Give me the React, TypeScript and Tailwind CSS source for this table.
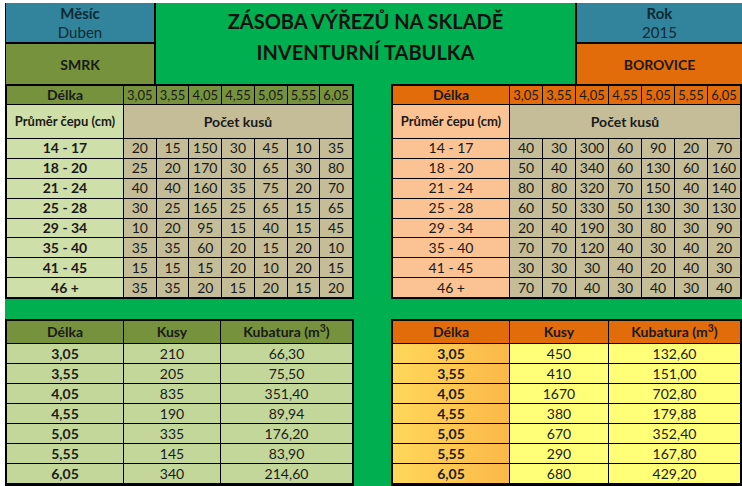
const lengths = ['3,05', '3,55', '4,05', '4,55', '5,05', '5,55', '6,05']

const smrkRows: [string, number[]][] = [
  ['14 - 17', [20, 15, 150, 30, 45, 10, 35]],
  ['18 - 20', [25, 20, 170, 30, 65, 30, 80]],
  ['21 - 24', [40, 40, 160, 35, 75, 20, 70]],
  ['25 - 28', [30, 25, 165, 25, 65, 15, 65]],
  ['29 - 34', [10, 20, 95, 15, 40, 15, 45]],
  ['35 - 40', [35, 35, 60, 20, 15, 20, 10]],
  ['41 - 45', [15, 15, 15, 20, 10, 20, 15]],
  ['46 +', [35, 35, 20, 15, 20, 15, 20]],
]

const borovRows: [string, number[]][] = [
  ['14 - 17', [40, 30, 300, 60, 90, 20, 70]],
  ['18 - 20', [50, 40, 340, 60, 130, 60, 160]],
  ['21 - 24', [80, 80, 320, 70, 150, 40, 140]],
  ['25 - 28', [60, 50, 330, 50, 130, 30, 130]],
  ['29 - 34', [20, 40, 190, 30, 80, 30, 90]],
  ['35 - 40', [70, 70, 120, 40, 30, 40, 20]],
  ['41 - 45', [30, 30, 30, 40, 20, 40, 30]],
  ['46 +', [70, 70, 40, 30, 40, 30, 40]],
]

const smrkSum: [string, string, string][] = [
  ['3,05', '210', '66,30'],
  ['3,55', '205', '75,50'],
  ['4,05', '835', '351,40'],
  ['4,55', '190', '89,94'],
  ['5,05', '335', '176,20'],
  ['5,55', '145', '83,90'],
  ['6,05', '340', '214,60'],
]

const borovSum: [string, string, string][] = [
  ['3,05', '450', '132,60'],
  ['3,55', '410', '151,00'],
  ['4,05', '1670', '702,80'],
  ['4,55', '380', '179,88'],
  ['5,05', '670', '352,40'],
  ['5,55', '290', '167,80'],
  ['6,05', '680', '429,20'],
]

const cell = 'flex items-center justify-center leading-none'

function CountTable({ rows, head, label, labelBold, width }: {
  rows: [string, number[]][]
  head: string
  label: string
  labelBold: boolean
  width: string
}) {
  return (
    <div className={`${width} h-full bg-black p-[2px] grid gap-px grid-cols-[116px_repeat(7,1fr)] grid-rows-[18px_33px_repeat(8,1fr)] text-[14px]`}>
      <div className={`${cell} ${head} font-bold`}>Délka</div>
      {lengths.map((l) => (
        <div key={l} className={`${cell} ${head} text-[13px]`}>{l}</div>
      ))}
      <div className={`${cell} ${label} font-bold text-[13px]`}>Průměr čepu (cm)</div>
      <div className={`${cell} col-span-7 bg-[#c4bd97] font-bold`}>Počet kusů</div>
      {rows.map(([range, vals]) => (
        <div key={range} className="contents">
          <div className={`${cell} ${label} ${labelBold ? 'font-bold' : ''}`}>{range}</div>
          {vals.map((v, i) => (
            <div key={i} className={`${cell} bg-[#c4bd97]`}>{v}</div>
          ))}
        </div>
      ))}
    </div>
  )
}

function SumTable({ rows, head, first, rest, width, cols }: {
  rows: [string, string, string][]
  head: string
  first: string
  rest: string
  width: string
  cols: string
}) {
  return (
    <div className={`${width} h-full bg-black p-[2px] grid gap-px ${cols} grid-rows-[22px_repeat(7,19px)] text-[14px]`}>
      <div className={`${cell} ${head} font-bold`}>Délka</div>
      <div className={`${cell} ${head} font-bold`}>Kusy</div>
      <div className={`${cell} ${head} font-bold`}>
        <span>Kubatura (m<sup>3</sup>)</span>
      </div>
      {rows.map(([l, k, m]) => (
        <div key={l} className="contents">
          <div className={`${cell} ${first} font-bold`}>{l}</div>
          <div className={`${cell} ${rest}`}>{k}</div>
          <div className={`${cell} ${rest}`}>{m}</div>
        </div>
      ))}
    </div>
  )
}

export default function App() {
  return (
    <div className="w-[742px] h-[486px] overflow-hidden bg-white font-['Lato',sans-serif] text-[#1a1a1a]">
      <div className="pt-[3px] pl-[5px] h-full">
        <div className="bg-[#00b050] h-full flex flex-col">
          {/* header */}
          <div className="h-[81px] flex shrink-0">
            <div className="w-[151px] bg-black pl-[1px] pr-[2px] flex flex-col gap-[2px]">
              <div className="h-[39px] bg-[#31849b] flex flex-col items-center justify-center text-[15px] leading-[19px] text-[#0f2a33]">
                <span className="font-bold">Měsíc</span>
                <span>Duben</span>
              </div>
              <div className="flex-1 bg-[#76923c] flex items-center justify-center font-bold text-[14px]">SMRK</div>
            </div>
            <div className="flex-1 flex flex-col items-center pt-[3px] text-[20px] font-bold leading-[31px] text-[#111]">
              <span>ZÁSOBA VÝŘEZŮ NA SKLADĚ</span>
              <span>INVENTURNÍ TABULKA</span>
            </div>
            <div className="w-[167px] bg-black pl-[2px] flex flex-col gap-[2px]">
              <div className="h-[39px] bg-[#31849b] flex flex-col items-center justify-center text-[15px] leading-[19px] text-[#0f2a33]">
                <span className="font-bold">Rok</span>
                <span>2015</span>
              </div>
              <div className="flex-1 bg-[#e26b0a] flex items-center justify-center font-bold text-[14px]">BOROVICE</div>
            </div>
          </div>

          {/* counts */}
          <div className="h-[215px] flex gap-[37px] shrink-0">
            <CountTable rows={smrkRows} head="bg-[#76923c]" label="bg-[#cfdfa9]" labelBold width="w-[349px]" />
            <CountTable rows={borovRows} head="bg-[#e26b0a]" label="bg-[#fbc294]" labelBold={false} width="w-[351px]" />
          </div>

          <div className="h-[20px] shrink-0" />

          {/* totals */}
          <div className="flex-1 flex gap-[37px]">
            <SumTable
              rows={smrkSum}
              head="bg-[#76923c]"
              first="bg-[#c4d79b]"
              rest="bg-[#c4d79b]"
              width="w-[349px]"
              cols="grid-cols-[116px_96px_1fr]"
            />
            <SumTable
              rows={borovSum}
              head="bg-[#e26b0a]"
              first="bg-gradient-to-r from-[#ffd75a] to-[#fbb848]"
              rest="bg-[#ffff78]"
              width="w-[351px]"
              cols="grid-cols-[116px_98px_1fr]"
            />
          </div>
        </div>
      </div>
    </div>
  )
}
